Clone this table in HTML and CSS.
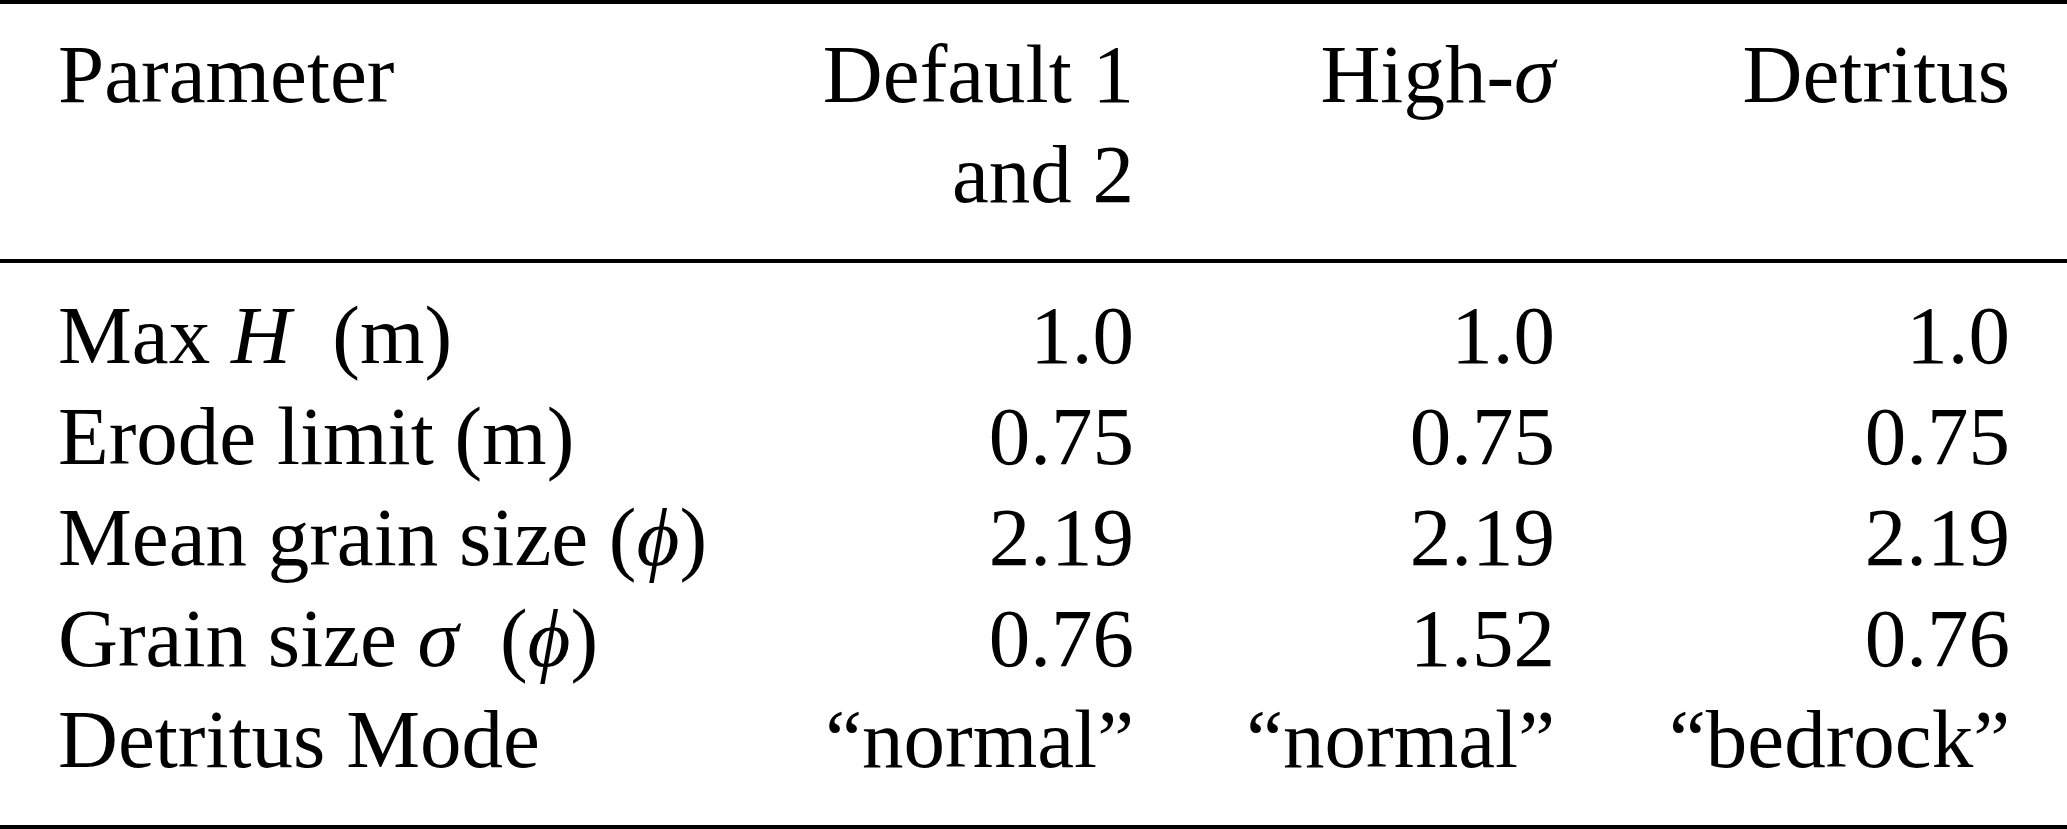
FILE: index.html
```html
<!DOCTYPE html>
<html lang="en">
<head>
<meta charset="utf-8">
<title>Parameter table</title>
<link rel="stylesheet" href="styles.css">
</head>
<body>
<table class="params">
  <colgroup>
    <col class="c-name">
    <col class="c-def">
    <col class="c-high">
    <col class="c-det">
  </colgroup>
  <thead>
    <tr>
      <th class="name">Parameter</th>
      <th class="num">Default 1<br>and 2</th>
      <th class="num">High-<i class="m">σ</i></th>
      <th class="num last">Detritus</th>
    </tr>
  </thead>
  <tbody>
    <tr class="first">
      <td class="name">Max <i class="m">H</i>&nbsp; (m)</td>
      <td class="num">1.0</td>
      <td class="num">1.0</td>
      <td class="num last">1.0</td>
    </tr>
    <tr>
      <td class="name">Erode limit (m)</td>
      <td class="num">0.75</td>
      <td class="num">0.75</td>
      <td class="num last">0.75</td>
    </tr>
    <tr>
      <td class="name">Mean grain size (<i class="m">ϕ</i>)</td>
      <td class="num">2.19</td>
      <td class="num">2.19</td>
      <td class="num last">2.19</td>
    </tr>
    <tr>
      <td class="name">Grain size <i class="m">σ</i>&nbsp; (<i class="m">ϕ</i>)</td>
      <td class="num">0.76</td>
      <td class="num">1.52</td>
      <td class="num last">0.76</td>
    </tr>
    <tr class="lastrow">
      <td class="name">Detritus Mode</td>
      <td class="num">“normal”</td>
      <td class="num">“normal”</td>
      <td class="num last">“bedrock”</td>
    </tr>
  </tbody>
</table>
</body>
</html>
```

FILE: styles.css
```css
html, body {
  margin: 0;
  padding: 0;
  background: #ffffff;
}

.params {
  width: 2067px;
  border-collapse: collapse;
  table-layout: fixed;
  font-family: "Liberation Serif", "Times New Roman", "DejaVu Serif", serif;
  font-size: 83px;
  color: #000000;
  border-top: 4px solid #000000;
  border-bottom: 4px solid #000000;
}

.c-name { width: 760px; }
.c-def { width: 374px; }
.c-high { width: 421px; }
.c-det { width: 512px; }

.params th,
.params td {
  padding: 0;
  font-weight: normal;
  vertical-align: top;
  white-space: nowrap;
}

.params th {
  line-height: 100px;
  padding-top: 20px;
  padding-bottom: 35px;
  border-bottom: 4px solid #000000;
}

.params td {
  line-height: 101px;
}

.params tr.first td {
  padding-top: 22px;
}

.params tr.lastrow td {
  padding-bottom: 35px;
}

.name {
  text-align: left;
  padding-left: 58px !important;
}

.num {
  text-align: right;
}

.last {
  padding-right: 57px !important;
}

.m {
  font-style: italic;
}
```
